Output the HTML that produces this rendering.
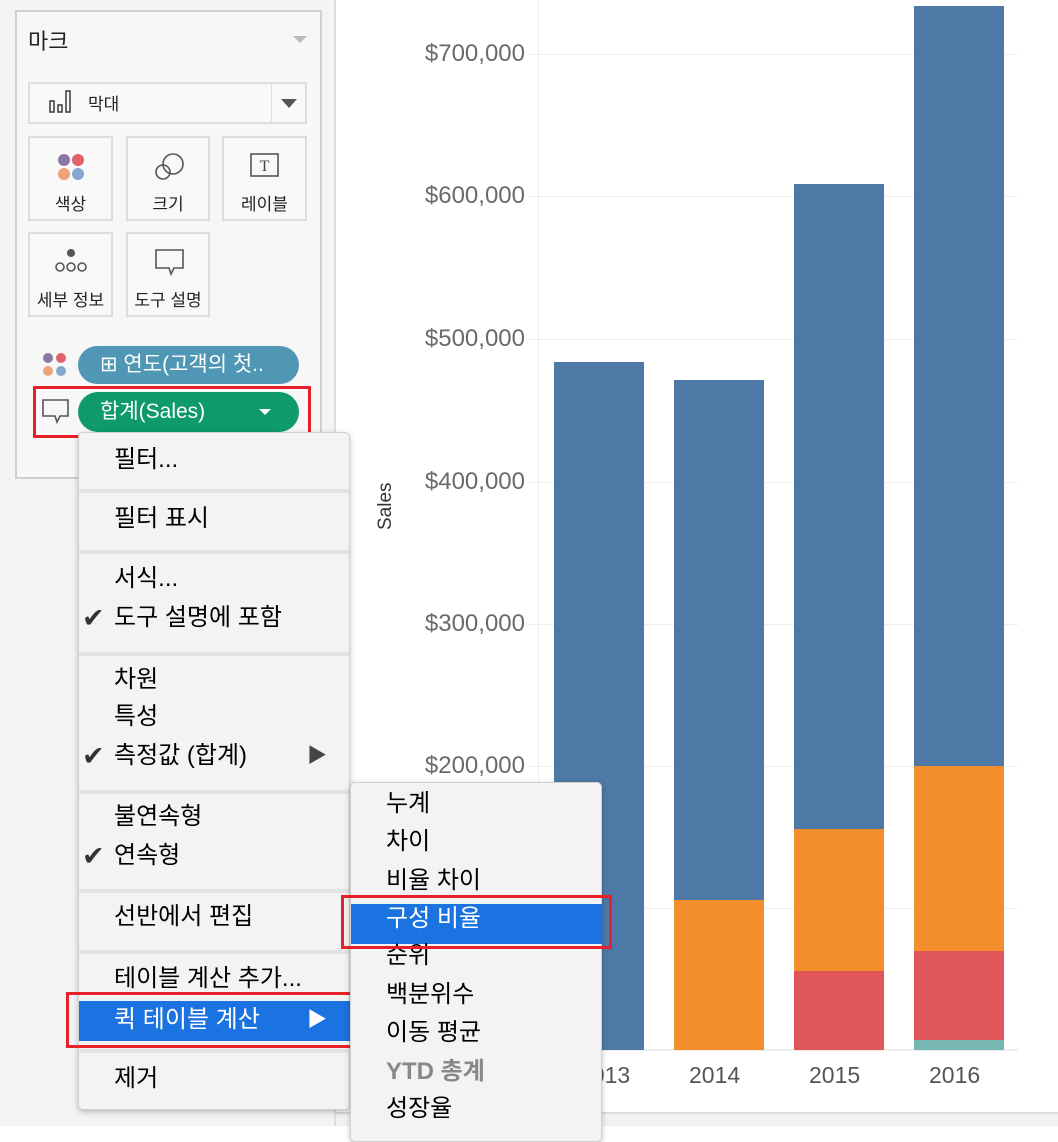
<!DOCTYPE html>
<html><head><meta charset="utf-8"><style>
*{margin:0;padding:0;box-sizing:border-box}
body{width:1058px;height:1126px;position:relative;overflow:hidden;background:#fff;font-family:"Liberation Sans","Noto Sans CJK KR",sans-serif}
.a{position:absolute}
.lp{left:0;top:0;width:336px;height:1126px;background:#f4f4f4;border-right:2px solid #ddd}
.card{left:15px;top:10px;width:307px;height:469px;border:2px solid #cfcfcf;background:#f7f7f7}
.btn{position:absolute;background:#f8f8f8;border:2px solid #ddd;width:85px;height:85px;font-size:17px;text-align:center;color:#222}
.btn .l{position:absolute;left:0;right:0;top:52px}
.grid{left:528px;width:490px;height:1px;background:#eee}
.yl{font-size:24px;color:#6a6a6a;text-align:right;width:155px;left:370px}
.bar{position:absolute}
.menu{background:#f3f3f3;border:1px solid #d0d0d0;border-radius:5px;box-shadow:0 2px 6px rgba(0,0,0,.25)}
.it{position:absolute;font-size:24px;color:#000;white-space:nowrap;line-height:30px}
.sep{position:absolute;left:0;right:0;height:4px;background:#e3e3e3}
.chk{position:absolute;left:3px;font-size:27px;color:#333;line-height:30px}
</style></head><body>
<div class="a lp"></div>
<div class="a card"></div>
<div class="a" style="left:28px;top:24px;font-size:22px;color:#222">마크</div>
<div class="a" style="left:293px;top:36px;border-left:7px solid transparent;border-right:7px solid transparent;border-top:7px solid #bbb"></div>
<div class="a" style="left:28px;top:82px;width:279px;height:42px;border:2px solid #ddd;background:#f9f9f9"></div>
<div class="a" style="left:271px;top:84px;width:1px;height:38px;background:#ddd"></div>
<div class="a" style="left:281px;top:99px;border-left:8px solid transparent;border-right:8px solid transparent;border-top:9px solid #555"></div>
<svg class="a" style="left:49px;top:90px" width="30" height="24"><g fill="none" stroke="#444" stroke-width="1.6"><rect x="1" y="11" width="4" height="11"/><rect x="9" y="15" width="4" height="7"/><rect x="17" y="1" width="4" height="21"/></g></svg>
<div class="a" style="left:88px;top:90px;font-size:17px;color:#222">막대</div>
<div class="btn" style="left:28px;top:136px"><svg class="a" style="left:27px;top:15px" width="30" height="30"><circle cx="7" cy="7" r="6" fill="#8a77a3"/><circle cx="21" cy="7" r="6" fill="#e2616a"/><circle cx="7" cy="21" r="6" fill="#eea27a"/><circle cx="21" cy="21" r="6" fill="#84a6cf"/></svg><div class="l">색상</div></div>
<div class="btn" style="left:126px;top:136px;width:84px"><svg class="a" style="left:26px;top:14px" width="32" height="30"><g fill="none" stroke="#555" stroke-width="1.6"><circle cx="19" cy="12" r="10"/><circle cx="9" cy="20" r="7"/></g></svg><div class="l">크기</div></div>
<div class="btn" style="left:222px;top:136px"><svg class="a" style="left:26px;top:15px" width="30" height="26"><rect x="1" y="1" width="27" height="22" fill="none" stroke="#555" stroke-width="1.6"/><text x="14.5" y="18" font-family="Liberation Serif" font-size="16" text-anchor="middle" fill="#444">T</text></svg><div class="l">레이블</div></div>
<div class="btn" style="left:28px;top:232px"><svg class="a" style="left:24px;top:14px" width="34" height="26"><circle cx="17" cy="5" r="4" fill="#555"/><g fill="none" stroke="#555" stroke-width="1.6"><circle cx="6" cy="19" r="4"/><circle cx="17" cy="19" r="4"/><circle cx="28" cy="19" r="4"/></g></svg><div class="l">세부 정보</div></div>
<div class="btn" style="left:126px;top:232px;width:84px"><svg class="a" style="left:26px;top:14px" width="32" height="30"><path d="M2 2H29V20H20L17 26L15 20H2Z" fill="none" stroke="#555" stroke-width="1.6"/></svg><div class="l">도구 설명</div></div>
<svg class="a" style="left:42px;top:352px" width="26" height="26"><circle cx="6" cy="6" r="5" fill="#8a77a3"/><circle cx="19" cy="6" r="5" fill="#e2616a"/><circle cx="6" cy="19" r="5" fill="#eea27a"/><circle cx="19" cy="19" r="5" fill="#84a6cf"/></svg>
<div class="a" style="left:78px;top:346px;width:221px;height:38px;border-radius:19px;background:#4f97b5;color:#fff;font-size:21px;line-height:38px;padding-left:22px">⊞ 연도(고객의 첫..</div>
<div class="a" style="left:33px;top:386px;width:278px;height:52px;border:3px solid #e8202a"></div>
<svg class="a" style="left:41px;top:398px" width="30" height="30"><path d="M2 2H27V18H19L16 24L14 18H2Z" fill="none" stroke="#555" stroke-width="1.6"/></svg>
<div class="a" style="left:78px;top:392px;width:221px;height:40px;border-radius:20px;background:#0e9a6a;color:#fff;font-size:21px;line-height:40px;padding-left:22px">합계(Sales)</div>
<div class="a" style="left:259px;top:409px;border-left:6px solid transparent;border-right:6px solid transparent;border-top:6px solid #fff"></div>

<div class="a grid" style="top:54px"></div><div class="a grid" style="top:196px"></div><div class="a grid" style="top:339px"></div><div class="a grid" style="top:482px"></div><div class="a grid" style="top:624px"></div><div class="a grid" style="top:766px"></div><div class="a grid" style="top:908px"></div>
<div class="a" style="left:538px;top:0;width:1px;height:1050px;background:#eee"></div>
<div class="a" style="left:538px;top:1049px;width:480px;height:2px;background:#eee"></div>
<div class="a yl" style="top:40px">$700,000</div><div class="a yl" style="top:182px">$600,000</div><div class="a yl" style="top:325px">$500,000</div><div class="a yl" style="top:468px">$400,000</div><div class="a yl" style="top:610px">$300,000</div><div class="a yl" style="top:752px">$200,000</div>
<div class="a" style="left:375px;transform:rotate(-90deg);transform-origin:left top;font-size:19px;color:#333;top:530px">Sales</div>
<div class="bar" style="left:554px;top:362px;width:90px;height:688px;background:#4e79a7"></div>
<div class="bar" style="left:674px;top:380px;width:90px;height:520px;background:#4e79a7"></div>
<div class="bar" style="left:674px;top:900px;width:90px;height:150px;background:#f28e2b"></div>
<div class="bar" style="left:794px;top:184px;width:90px;height:646px;background:#4e79a7"></div>
<div class="bar" style="left:794px;top:829px;width:90px;height:142px;background:#f28e2b"></div>
<div class="bar" style="left:794px;top:971px;width:90px;height:79px;background:#e15759"></div>
<div class="bar" style="left:914px;top:6px;width:90px;height:760px;background:#4e79a7"></div>
<div class="bar" style="left:914px;top:766px;width:90px;height:185px;background:#f28e2b"></div>
<div class="bar" style="left:914px;top:951px;width:90px;height:89px;background:#e15759"></div>
<div class="bar" style="left:914px;top:1040px;width:90px;height:10px;background:#76b7b2"></div>
<div class="a" style="left:689px;top:1062px;font-size:23px;color:#555">2014</div>
<div class="a" style="left:809px;top:1062px;font-size:23px;color:#555">2015</div>
<div class="a" style="left:929px;top:1062px;font-size:23px;color:#555">2016</div>
<div class="a" style="left:579px;top:1062px;font-size:23px;color:#555">2013</div>
<div class="a" style="left:336px;top:1112px;width:722px;height:14px;background:#f2f2f2;border-top:2px solid #ddd"></div>

<div class="a menu" style="left:78px;top:432px;width:272px;height:678px">
<div class="it" style="left:35px;top:12px">필터...</div>
<div class="sep" style="top:56px"></div>
<div class="it" style="left:35px;top:71px">필터 표시</div>
<div class="sep" style="top:117px"></div>
<div class="it" style="left:35px;top:131px">서식...</div>
<div class="chk" style="top:170px">✔</div><div class="it" style="left:35px;top:170px">도구 설명에 포함</div>
<div class="sep" style="top:219px"></div>
<div class="it" style="left:35px;top:232px">차원</div>
<div class="it" style="left:35px;top:269px">특성</div>
<div class="chk" style="top:308px">✔</div><div class="it" style="left:35px;top:308px">측정값 (합계)</div><div class="it" style="left:228px;top:308px;color:#444;font-size:20px">▶</div>
<div class="sep" style="top:357px"></div>
<div class="it" style="left:35px;top:369px">불연속형</div>
<div class="chk" style="top:408px">✔</div><div class="it" style="left:35px;top:408px">연속형</div>
<div class="sep" style="top:456px"></div>
<div class="it" style="left:35px;top:469px">선반에서 편집</div>
<div class="sep" style="top:517px"></div>
<div class="it" style="left:35px;top:531px">테이블 계산 추가...</div>
<div class="a" style="left:0;top:568px;width:271px;height:40px;background:#1a73e0"></div>
<div class="it" style="left:35px;top:572px;color:#fff">퀵 테이블 계산</div><div class="it" style="left:228px;top:572px;color:#fff;font-size:20px">▶</div>
<div class="sep" style="top:616px"></div>
<div class="it" style="left:35px;top:631px">제거</div>
</div>
<div class="a" style="left:66px;top:992px;width:294px;height:56px;border:3px solid #e8202a"></div>

<div class="a menu" style="left:350px;top:782px;width:252px;height:360px">
<div class="it" style="left:35px;top:6px">누계</div>
<div class="it" style="left:35px;top:44px">차이</div>
<div class="it" style="left:35px;top:83px">비율 차이</div>
<div class="a" style="left:0;top:121px;width:251px;height:40px;background:#1a73e0"></div>
<div class="it" style="left:35px;top:121px;color:#fff">구성 비율</div>
<div class="it" style="left:35px;top:158px">순위</div>
<div class="it" style="left:35px;top:197px">백분위수</div>
<div class="it" style="left:35px;top:235px">이동 평균</div>
<div class="it" style="left:35px;top:274px;color:#888;font-weight:bold">YTD 총계</div>
<div class="it" style="left:35px;top:311px">성장율</div>
</div>
<div class="a" style="left:341px;top:895px;width:271px;height:54px;border:3px solid #e8202a"></div>
</body></html>
